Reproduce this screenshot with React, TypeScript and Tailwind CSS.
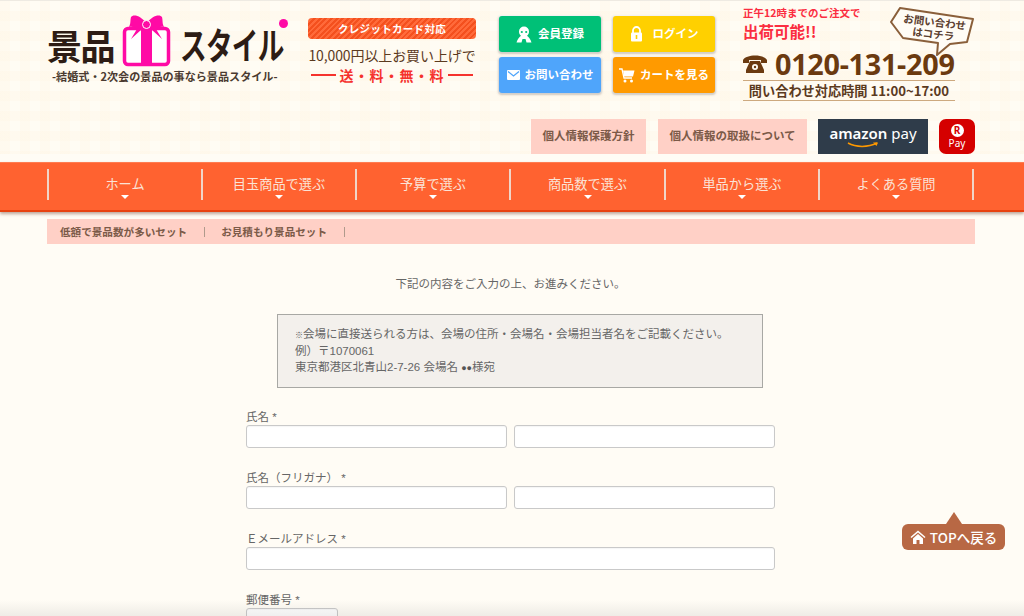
import React from "react";

const cjk = "font-['Noto_Sans_CJK_JP','Noto_Sans',sans-serif]";

function Gift() {
  return (
    <svg width="51" height="52" viewBox="0 0 49 52" className="shrink-0">
      <rect x="2.5" y="13.5" width="44" height="36" rx="3.5" fill="#fff" stroke="#ff0aa5" strokeWidth="3.5" />
      <rect x="19" y="11" width="11" height="40" fill="#ff0aa5" />
      <path d="M24.5 9 C19 0 11 -1 9 2 C8 6 9 8 7 12 C11 11 13 13 15 14 L9 24 L19 15 Z" fill="#ff0aa5" />
      <path d="M24.5 9 C30 0 38 -1 40 2 C41 6 40 8 42 12 C38 11 36 13 34 14 L40 24 L30 15 Z" fill="#ff0aa5" />
      <circle cx="24.5" cy="9.5" r="4" fill="#ff0aa5" stroke="#fff" strokeWidth="1" />
    </svg>
  );
}

function Logo() {
  return (
    <div className="w-[261px] pt-[13px] shrink-0">
      <div className="flex items-end h-[53px] relative">
        <span className="shrink-0 text-[35px] leading-[34px] font-bold text-[#2d1c14] w-[74px] mb-[5px] whitespace-nowrap tracking-[-1.5px]">景品</span>
        <Gift />
        <span className="shrink-0 text-[37px] leading-[34px] font-bold text-[#2d1c14] tracking-[-1px] ml-[8px] mb-[6px] whitespace-nowrap origin-left scale-x-[0.72]">スタイル</span>
        <span className="absolute left-[232px] top-[5px] w-[9px] h-[9px] rounded-full bg-[#ff0aa5]" />
      </div>
      <div className="text-[11.1px] leading-[14px] font-bold text-[#4a3a30] mt-[2px] ml-[5px] whitespace-nowrap">
        -結婚式・2次会の景品の事なら景品スタイル-
      </div>
    </div>
  );
}

function Credit() {
  return (
    <div className="w-[168px] shrink-0 pt-[17px]">
      <div className="h-[21px] rounded-[4px] bg-[repeating-linear-gradient(135deg,#f4501e_0,#f4501e_2px,#ff6a3a_2px,#ff6a3a_4px)] text-white text-[10.5px] font-bold leading-[21px] text-center tracking-[0.3px]">
        クレジットカード対応
      </div>
      <div className="text-[#5b3a1e] text-[14px] leading-[18px] mt-[7px] text-center whitespace-nowrap tracking-[-0.1px]">10,000円以上お買い上げで</div>
      <div className="flex items-center justify-between mt-[1px] px-[3px]">
        <span className="w-[25px] h-[2px] bg-[#f5322d]" />
        <span className="text-[#f5322d] text-[14px] leading-[20px] font-bold tracking-[1px] whitespace-nowrap">送・料・無・料</span>
        <span className="w-[25px] h-[2px] bg-[#f5322d]" />
      </div>
    </div>
  );
}

function ActionButton({ color, icon, label }: { color: string; icon: React.ReactNode; label: string }) {
  return (
    <div className={`${color} w-[102px] h-[36px] rounded-[3px] shadow-[0_1px_2px_1px_rgba(120,110,100,0.35),0_0_0_1px_#fff] flex items-center justify-center gap-[6px] text-white text-[11.5px] font-bold`}>
      {icon}
      <span className="whitespace-nowrap">{label}</span>
    </div>
  );
}

function Actions() {
  return (
    <div className="grid grid-cols-[102px_102px] gap-x-[12px] gap-y-[5px] ml-[23px] mt-[15px] shrink-0 self-start">
      <ActionButton
        color="bg-[#00c077]"
        label="会員登録"
        icon={
          <svg width="16" height="17" viewBox="0 0 16 17">
            <path d="M8 0.500a5 5 0 0 0-5 5c0 2 .8 3.400 2 4.300C3 11 1.500 13.500 .5 16.500h5l1-3.500h3l1 3.500h5c-1-3-2.500-5.500-4.500-6.700 1.200-.9 2-2.300 2-4.300a5 5 0 0 0-5-5z" fill="#fff" />
            <circle cx="5.800" cy="6" r="1.100" fill="#00c077" />
            <circle cx="10.200" cy="6" r="1.100" fill="#00c077" />
          </svg>
        }
      />
      <ActionButton
        color="bg-[#ffd000]"
        label="ログイン"
        icon={
          <svg width="13" height="16" viewBox="0 0 13 16" className="mr-[4px]">
            <path d="M3 7V4.500a3.500 3.500 0 0 1 7 0V7" fill="none" stroke="#fff" strokeWidth="1.800" />
            <rect x="1" y="6.500" width="11" height="9" rx="1" fill="#fff" />
            <rect x="5.700" y="9" width="1.600" height="4" fill="#ffd000" />
          </svg>
        }
      />
      <ActionButton
        color="bg-[#4fa5fb]"
        label="お問い合わせ"
        icon={
          <svg width="13" height="10" viewBox="0 0 13 10" className="mr-[-1px]">
            <rect width="13" height="10" rx="1" fill="#fff" />
            <path d="M1 1.500 6.500 6 12 1.500" fill="none" stroke="#4fa5fb" strokeWidth="1.300" />
          </svg>
        }
      />
      <ActionButton
        color="bg-[#ff9a00]"
        label="カートを見る"
        icon={
          <svg width="16" height="15" viewBox="0 0 16 15" className="mr-[-1px]">
            <path d="M0 1h3l2 9h8" fill="none" stroke="#fff" strokeWidth="1.300" />
            <path d="M4 2.500h11.500l-1.500 6H5.200z" fill="#fff" />
            <circle cx="6" cy="13" r="1.500" fill="#fff" />
            <circle cx="12.500" cy="13" r="1.500" fill="#fff" />
          </svg>
        }
      />
    </div>
  );
}

function Phone() {
  return (
    <div className="ml-[28px] w-[232px] pt-[5px] relative shrink-0">
      <div className="text-[#fb2d40] text-[10.5px] leading-[13px] font-bold whitespace-nowrap">正午12時までのご注文で</div>
      <div className="text-[#fb2d40] text-[15.5px] leading-[20px] font-bold mt-[2px] whitespace-nowrap">出荷可能!!</div>
      <div className="flex items-center mt-[9px] h-[28px]">
        <svg width="24" height="20" viewBox="0 0 24 20" className="mr-[8px] shrink-0">
          <path d="M0 6C3 0 21 0 24 6v3h-6V6H6v3H0z" fill="#6b3a10" />
          <path d="M7 7h10l4 9v3H3v-3z" fill="#6b3a10" />
          <circle cx="12" cy="13" r="3" fill="#fffcf5" />
          <circle cx="12" cy="13" r="1.200" fill="#6b3a10" />
        </svg>
        <span className="text-[28.8px] leading-[28px] font-bold text-[#6b3a10] font-['Noto_Sans',sans-serif] tracking-[-0.3px] whitespace-nowrap">0120-131-209</span>
      </div>
      <div className="w-[212px] h-[21px] border-y-[1px] border-[#cda97f] text-[#5b3a1e] text-[13.2px] leading-[19px] font-bold mt-[2px] text-center whitespace-nowrap">
        問い合わせ対応時間 11:00~17:00
      </div>
      <div className="absolute left-[146px] top-[6px] w-[90px] h-[50px]">
        <svg width="86" height="50" viewBox="0 0 86 50" className="absolute left-0 top-0">
          <path d="M11 1 L84 12 L78 35 L61 37 L48 48 L49 36 L14 31 L2 15 Z" fill="#fffcf5" stroke="#8a5f3a" strokeWidth="2" strokeLinejoin="round" />
        </svg>
        <div className="absolute left-[6px] top-[9px] w-[78px] rotate-[7deg] text-center text-[#5b4030] text-[10.5px] leading-[12px] font-bold whitespace-nowrap">
          お問い合わせ
          <br />
          はコチラ
        </div>
      </div>
    </div>
  );
}

function SubLinks() {
  return (
    <div className="flex justify-end items-center h-[36px] mt-[13px]">
      <div className="w-[115px] h-[35px] bg-[#ffd0c6] text-[#7b5a48] text-[11.5px] font-bold flex items-center justify-center whitespace-nowrap">個人情報保護方針</div>
      <div className="w-[149px] h-[35px] ml-[12px] bg-[#ffd0c6] text-[#7b5a48] text-[11.5px] font-bold flex items-center justify-center whitespace-nowrap">個人情報の取扱について</div>
      <div className="w-[110px] h-[35px] ml-[11px] bg-[#2f3c4a] flex flex-col items-center justify-center text-white">
        <span className="font-['Noto_Sans',sans-serif] text-[15px] leading-[17px] whitespace-nowrap">
          <span className="font-semibold">amazon</span> pay
        </span>
        <svg width="32" height="6" viewBox="0 0 32 6" className="mr-[20px]">
          <path d="M1 1c8 4.500 20 4.500 29 0" fill="none" stroke="#f90" strokeWidth="1.500" />
          <path d="M26 0.500l5 0-1.500 3.500z" fill="#f90" />
        </svg>
      </div>
      <div className="w-[36px] h-[35px] ml-[11px] rounded-[7px] bg-[#d50000] flex flex-col items-center justify-center text-white">
        <span className="w-[13px] h-[13px] rounded-full bg-white text-[#d50000] text-[10px] leading-[13px] font-bold text-center font-['Noto_Sans',sans-serif]">R</span>
        <span className="text-[10px] leading-[12px] font-['Noto_Sans',sans-serif]">Pay</span>
      </div>
    </div>
  );
}

const navItems = [
  { label: "ホーム", width: "w-[152px]" },
  { label: "目玉商品で選ぶ", width: "w-[154px] border-l-[2px] border-l-[#f1d5c8]" },
  { label: "予算で選ぶ", width: "w-[154px] border-l-[2px] border-l-[#f1d5c8]" },
  { label: "商品数で選ぶ", width: "w-[155px] border-l-[2px] border-l-[#f1d5c8]" },
  { label: "単品から選ぶ", width: "w-[154px] border-l-[2px] border-l-[#f1d5c8]" },
  { label: "よくある質問", width: "w-[154px] border-l-[2px] border-l-[#f1d5c8]" },
];

function Nav() {
  return (
    <nav className="h-[50px] bg-[#ff6230] border-t-[1px] border-t-[#ff7b50] border-b-[2px] border-b-[#e84210] shadow-[0_2px_3px_rgba(110,60,40,0.45)] mt-[8px] pl-[47px] flex items-start pt-[6px]">
      <div className="flex h-[31px] border-r-[2px] border-r-[#f1d5c8] border-l-[2px] border-l-[#f1d5c8]">
        {navItems.map((n) => (
          <div key={n.label} className={`h-[31px] flex flex-col items-center ${n.width}`}>
            <span className="text-[13.2px] leading-[18px] mt-[6px] text-[#fbe3d6] whitespace-nowrap">{n.label}</span>
            <span className="mt-[2px] w-0 h-0 border-x-[4px] border-x-transparent border-t-[4px] border-t-white" />
          </div>
        ))}
      </div>
    </nav>
  );
}

function Field({ label, children, top }: { label: string; children: React.ReactNode; top: string }) {
  return (
    <div className={top}>
      <div className="text-[11.5px] leading-[14px] text-[#666] whitespace-pre">{label} *</div>
      <div className="flex gap-[7px] mt-[1px]">{children}</div>
    </div>
  );
}

const inputClass = "h-[23px] bg-white border border-[#c9c9c9] rounded-[3px] shadow-[inset_0_1px_1px_rgba(0,0,0,0.04)]";

export default function App() {
  return (
    <div className={`${cjk} relative w-[1024px] h-[616px] overflow-hidden bg-[#fffcf5]`}>
      <header className="h-[154px] bg-[#fffcf4] bg-[linear-gradient(90deg,rgba(255,235,205,0.12)_50%,transparent_50%),linear-gradient(0deg,rgba(255,235,205,0.12)_50%,transparent_50%)] bg-[length:20px_20px] border-t-[1px] border-t-[#eeeae2]">
        <div className="w-[928px] ml-[47px]">
          <div className="flex h-[104px]">
            <Logo />
            <Credit />
            <Actions />
            <Phone />
          </div>
          <SubLinks />
        </div>
      </header>
      <Nav />
      <div className="w-[928px] ml-[47px] mt-[7px] h-[25px] bg-[#ffd0c6] flex items-center pl-[13px] text-[#7b5a48] text-[10.6px] font-bold">
        <span className="whitespace-nowrap pr-[17px] border-r-[1px] border-r-[#b09a8c] leading-[10px]">低額で景品数が多いセット</span>
        <span className="whitespace-nowrap pl-[16px] pr-[17px] border-r-[1px] border-r-[#b09a8c] leading-[10px]">お見積もり景品セット</span>
      </div>
      <main className="w-[529px] ml-[246px] font-['Liberation_Sans','Noto_Sans_CJK_JP',sans-serif]">
        <p className="text-center text-[11.5px] leading-[16px] text-[#666] mt-[32px]">下記の内容をご入力の上、お進みください。</p>
        <div className="ml-[31px] w-[486px] h-[74px] mt-[22px] bg-[#f3f0ec] border border-[#a8a8a4] pt-[11px] pl-[17px] text-[11.5px] text-[#666] whitespace-nowrap">
          <div className="h-[16.500px] leading-[16.500px]">
            <span className="text-[8px] text-[#555]">※</span>会場に直接送られる方は、会場の住所・会場名・会場担当者名をご記載ください。
          </div>
          <div className="h-[16.500px] leading-[16.500px]">例）〒1070061</div>
          <div className="h-[16.500px] leading-[16.500px]">
            東京都港区北青山2-7-26 会場名 <span className="text-[9px] text-[#555]">●●</span>様宛
          </div>
        </div>
        <Field label="氏名" top="mt-[22px]">
          <div className={`${inputClass} w-[261px]`} />
          <div className={`${inputClass} w-[261px]`} />
        </Field>
        <Field label="氏名（フリガナ）" top="mt-[23px]">
          <div className={`${inputClass} w-[261px]`} />
          <div className={`${inputClass} w-[261px]`} />
        </Field>
        <Field label="Ｅメールアドレス" top="mt-[23px]">
          <div className={`${inputClass} w-[529px]`} />
        </Field>
        <Field label="郵便番号" top="mt-[23px]">
          <div className={`${inputClass} w-[92px]`} />
        </Field>
      </main>
      <div className="absolute left-[902px] top-[512px] flex flex-col items-center">
        <span className="w-0 h-0 border-x-[8px] border-x-transparent border-b-[12px] border-b-[#b86844]" />
        <div className="w-[103px] h-[26px] rounded-[6px] bg-[#b86844] text-white text-[13.5px] font-medium flex items-center justify-center gap-[4px] whitespace-nowrap">
          <svg width="16" height="14" viewBox="0 0 16 14">
            <path d="M8 0.500 0.500 7l1 1L8 2.500 14.500 8l1-1zM3 8.500V14h3.500v-4h3v4H13V8.500L8 4z" fill="#fff" />
          </svg>
          TOPへ戻る
        </div>
      </div>
      <div className="absolute left-0 right-0 bottom-0 h-[16px] bg-gradient-to-b from-transparent to-[rgba(120,120,120,0.12)] pointer-events-none" />
    </div>
  );
}
